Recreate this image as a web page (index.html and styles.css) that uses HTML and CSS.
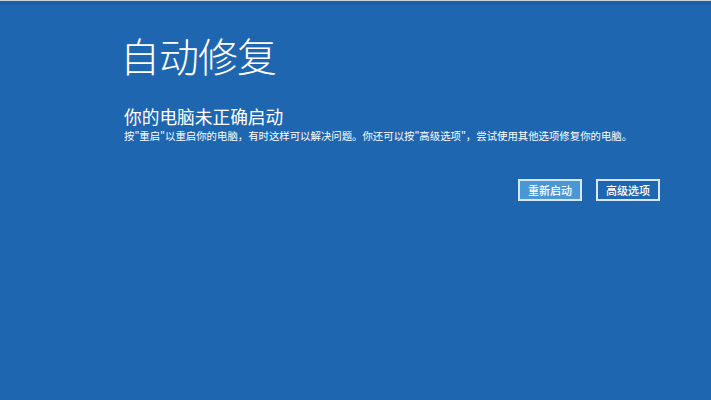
FILE: index.html
```html
<!DOCTYPE html>
<html lang="zh-CN">
<head>
<meta charset="utf-8">
<link rel="stylesheet" href="styles.css">
</head>
<body>
<div class="topline"></div>
<div class="topband"></div>
<main class="screen">
  <h1 class="title">自动修复</h1>
  <h2 class="subtitle">你的电脑未正确启动</h2>
  <p class="desc">按"重启"以重启你的电脑，有时这样可以解决问题。你还可以按"高级选项"，尝试使用其他选项修复你的电脑。</p>
  <div class="actions">
    <button class="btn btn-primary">重新启动</button>
    <button class="btn">高级选项</button>
  </div>
</main>
</body>
</html>
```
FILE: styles.css
```css
html, body {
  margin: 0;
  padding: 0;
  height: 100%;
}
body {
  background: #1f66b1;
  font-family: "Noto Sans CJK SC", "Noto Sans", sans-serif;
  color: #ffffff;
  overflow: hidden;
}
.topline {
  height: 1px;
  background: #c9d3dd;
}
.topband {
  height: 4px;
  background: #1c5fa7;
}
.screen {
  padding: 0 51px 0 123px;
}
.title {
  margin: 22px 0 0 -3px;
  font-size: 40px;
  font-weight: 300;
  line-height: 56px;
  letter-spacing: -1px;
}
.subtitle {
  margin: 21px 0 0 1px;
  font-size: 17.7px;
  font-weight: 400;
  line-height: 24px;
}
.desc {
  margin: 1px 0 0 1px;
  font-size: 10.4px;
  line-height: 14px;
}
.actions {
  display: flex;
  justify-content: flex-end;
  gap: 14px;
  margin-top: 36px;
}
.btn {
  width: 64px;
  height: 22px;
  padding: 0;
  border: 2px solid #d6e8f6;
  background: #1f66b1;
  color: #ffffff;
  font-family: "Noto Sans CJK SC", sans-serif;
  font-size: 11px;
  font-weight: 500;
  line-height: 18px;
}
.btn-primary {
  background: #4a97d4;
}
```
